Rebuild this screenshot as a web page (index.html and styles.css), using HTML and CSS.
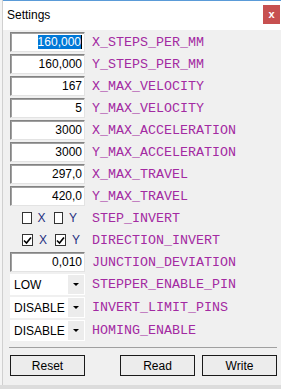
FILE: index.html
```html
<!DOCTYPE html>
<html lang="en">
  <head>
    <meta charset="UTF-8" />
    <title>Settings</title>
    <link rel="stylesheet" href="styles.css">
  </head>
  <body>
    <div class="desk">
      <div class="behind"></div>
      <div class="window">
        <div class="titlebar">
          <span class="title">Settings</span>
          <span class="close">x</span>
        </div>
        <div class="content">
          <div class="row">
            <div class="field"><span class="sel">160,000</span><span class="caret"></span></div>
            <span class="label">X_STEPS_PER_MM</span>
          </div>
          <div class="row">
            <div class="field">160,000</div>
            <span class="label">Y_STEPS_PER_MM</span>
          </div>
          <div class="row">
            <div class="field">167</div>
            <span class="label">X_MAX_VELOCITY</span>
          </div>
          <div class="row">
            <div class="field">5</div>
            <span class="label">Y_MAX_VELOCITY</span>
          </div>
          <div class="row">
            <div class="field">3000</div>
            <span class="label">X_MAX_ACCELERATION</span>
          </div>
          <div class="row">
            <div class="field">3000</div>
            <span class="label">Y_MAX_ACCELERATION</span>
          </div>
          <div class="row">
            <div class="field">297,0</div>
            <span class="label">X_MAX_TRAVEL</span>
          </div>
          <div class="row">
            <div class="field">420,0</div>
            <span class="label">Y_MAX_TRAVEL</span>
          </div>
          <div class="row">
            <div class="checks">
              <span class="box"></span><span class="axis">X</span>
              <span class="box"></span><span class="axis">Y</span>
            </div>
            <span class="label">STEP_INVERT</span>
          </div>
          <div class="row">
            <div class="checks">
              <span class="box"><svg width="9" height="9" viewBox="0 0 9 9"><path d="M1 4.5 L3.5 7 L8 1.5" fill="none" stroke="#000" stroke-width="1.6"/></svg></span><span class="axis">X</span>
              <span class="box"><svg width="9" height="9" viewBox="0 0 9 9"><path d="M1 4.5 L3.5 7 L8 1.5" fill="none" stroke="#000" stroke-width="1.6"/></svg></span><span class="axis">Y</span>
            </div>
            <span class="label">DIRECTION_INVERT</span>
          </div>
          <div class="row">
            <div class="field">0,010</div>
            <span class="label">JUNCTION_DEVIATION</span>
          </div>
          <div class="row tall">
            <div class="combo"><span class="combo-text">LOW</span><span class="combo-btn"><span class="arrow"></span></span></div>
            <span class="label">STEPPER_ENABLE_PIN</span>
          </div>
          <div class="row tall">
            <div class="combo"><span class="combo-text">DISABLE</span><span class="combo-btn"><span class="arrow"></span></span></div>
            <span class="label">INVERT_LIMIT_PINS</span>
          </div>
          <div class="row tall">
            <div class="combo"><span class="combo-text">DISABLE</span><span class="combo-btn"><span class="arrow"></span></span></div>
            <span class="label">HOMING_ENABLE</span>
          </div>
        </div>
        <div class="sep"></div>
        <div class="buttons">
          <button class="btn">Reset</button>
          <span class="spacer"></span>
          <button class="btn">Read</button>
          <button class="btn">Write</button>
        </div>
      </div>
    </div>
  </body>
</html>
```

FILE: styles.css
```css
html,
body {
  margin: 0px;
  padding: 0px;
}
body {
  width: 281px;
  height: 389px;
  overflow: hidden;
  background-color: #dcdcdc;
  font-family: "Liberation Sans", Arial, sans-serif;
  font-size: 12px;
}
.desk {
  display: flex;
  height: 389px;
}
.behind {
  width: 3px;
  height: 385px;
  background-color: #f4f4f4;
  border-right: 1px solid #d0d0d0;
  box-sizing: border-box;
}
.window {
  width: 278px;
  height: 385px;
  background-color: #f0f0f0;
  border-top: 1px solid #5a9bd8;
  box-sizing: border-box;
  display: flex;
  flex-direction: column;
}
.titlebar {
  height: 29px;
  background-color: #fff;
  display: flex;
  align-items: flex-start;
  justify-content: space-between;
}
.title {
  padding-left: 4px;
  line-height: 28px;
  font-size: 12px;
  color: #000;
}
.close {
  width: 17px;
  height: 19px;
  margin-top: 4px;
  margin-right: 1px;
  background-color: #c75050;
  color: #fff;
  font-weight: bold;
  font-size: 11px;
  line-height: 18px;
  text-align: center;
}
.content {
  display: flex;
  flex-direction: column;
  gap: 2px;
  padding: 2px 0px 0px 7px;
}
.row {
  display: flex;
  align-items: center;
  height: 20px;
}
.row.tall {
  height: 21px;
}
.field {
  width: 75px;
  height: 20px;
  box-sizing: border-box;
  background-color: #fff;
  border: 1px solid;
  border-color: #838383 #e3e3e3 #e3e3e3 #838383;
  box-shadow: inset 1px 1px 0 #a0a0a0;
  display: flex;
  align-items: center;
  justify-content: flex-end;
  padding-right: 2px;
  color: #000;
}
.sel {
  background-color: #0078d7;
  color: #fff;
  line-height: 14px;
}
.caret {
  display: inline-block;
  width: 1px;
  height: 14px;
  background-color: #000;
}
.label {
  margin-left: 7px;
  font-family: "Liberation Mono", "Courier New", monospace;
  font-size: 13.33px;
  color: #a32aa2;
}
.checks {
  width: 75px;
  display: flex;
  align-items: center;
  padding-left: 12px;
  box-sizing: border-box;
}
.box {
  width: 12px;
  height: 12px;
  box-sizing: border-box;
  border: 1px solid #333;
  background-color: #fff;
  display: flex;
  align-items: center;
  justify-content: center;
}
.axis {
  width: 8px;
  margin-left: 6px;
  margin-right: 8px;
  color: #1f2f80;
}
.combo {
  width: 75px;
  height: 21px;
  background-color: #fff;
  display: flex;
  align-items: center;
}
.combo-text {
  flex: 1;
  padding-left: 4px;
  color: #000;
}
.combo-btn {
  width: 16px;
  height: 19px;
  margin-right: 1px;
  background-color: #ececec;
  display: flex;
  align-items: center;
  justify-content: center;
}
.arrow {
  width: 0;
  height: 0;
  border-left: 3px solid transparent;
  border-right: 3px solid transparent;
  border-top: 3px solid #000;
}
.sep {
  height: 1px;
  margin: 6px 4px 0px 6px;
  background-color: #a0a0a0;
}
.buttons {
  display: flex;
  gap: 7px;
  margin-top: 7px;
  padding: 0px 4px 0px 7px;
}
.spacer {
  flex: 1;
}
.btn {
  width: 75px;
  height: 21px;
  margin: 0px;
  padding: 0px;
  border: 1px solid #1a1a1a;
  background-color: #ececec;
  font-family: "Liberation Sans", Arial, sans-serif;
  font-size: 12px;
  color: #000;
}
```
